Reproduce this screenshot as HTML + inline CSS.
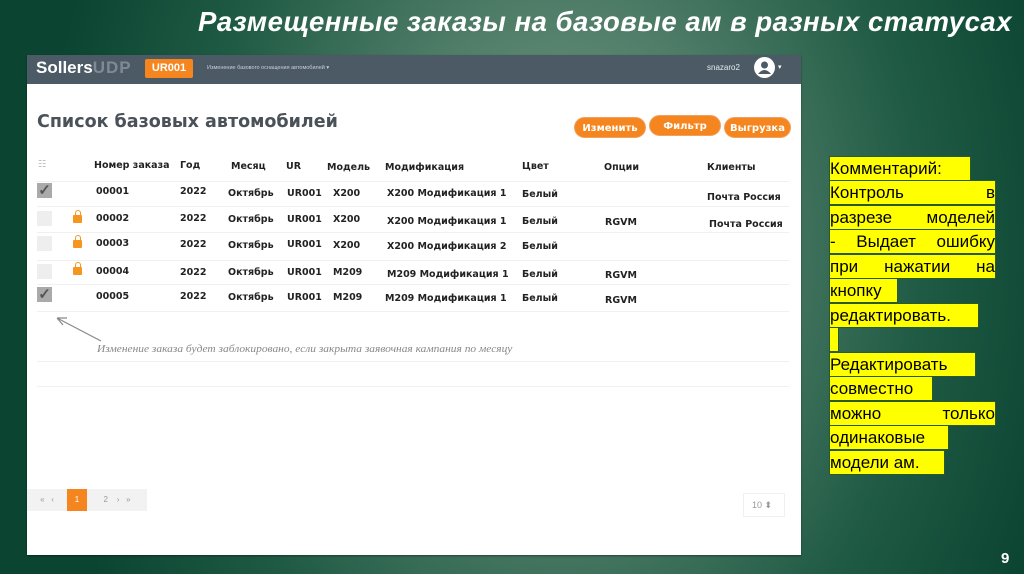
<!DOCTYPE html>
<html><head><meta charset="utf-8"><style>
*{margin:0;padding:0;box-sizing:border-box}
body{width:1024px;height:574px;overflow:hidden;position:relative;font-family:"Liberation Sans",sans-serif;
background:radial-gradient(ellipse 520px 700px at 560px 250px,#7a9e8c 0%,#4f7d68 35%,#1f5a44 70%,#0b4532 100%);}
.title{position:absolute;left:198px;top:6px;color:#fff;font-weight:bold;font-style:italic;font-size:27.5px;white-space:nowrap;letter-spacing:0.5px}
.shot{position:absolute;left:27px;top:55px;width:774px;height:500px;background:#fff;box-shadow:0 1px 2px rgba(0,0,0,.4)}
.bar{position:absolute;left:0;top:0;width:774px;height:29px;background:#4c5a66}
.logo{position:absolute;left:9px;top:3px;color:#fff;font-weight:bold;font-size:17px}
.logo span{color:#7e8b96;letter-spacing:1px}
.ur{position:absolute;left:118px;top:4px;width:48px;height:19px;background:#f5861f;color:#fff;font-weight:bold;font-size:11px;text-align:center;line-height:19px;border-radius:2px}
.sub{position:absolute;left:180px;top:10px;color:#c8d0d6;font-size:5.5px}
.user{position:absolute;left:680px;top:8px;color:#e6eaee;font-size:8px}
.av{position:absolute;left:727px;top:2px;width:21px;height:21px;border-radius:50%;background:#fff}
.h1{position:absolute;left:10px;top:57px;font-family:"DejaVu Sans",sans-serif;font-weight:bold;font-size:17.5px;color:#4a5158}
.btn{position:absolute;top:62px;height:21px;background:#f5861f;color:#fff;border-radius:11px;font-family:"DejaVu Sans",sans-serif;font-weight:bold;font-size:10px;line-height:21px;text-align:center;border:1px solid #f0a060}
.t{position:absolute;font-family:"DejaVu Sans",sans-serif;font-weight:bold;font-size:9.5px;color:#222;white-space:nowrap}
.cb{position:absolute;left:10px;width:15px;height:15px;background:#eee}
.cb.on{background:#aaa;color:#555;font-size:15px;line-height:15px;text-align:center;font-weight:bold}
.lock{position:absolute;left:46px;width:9px;height:8px;background:#f5961f;border-radius:1px}
.lock:before{content:"";position:absolute;left:1.5px;top:-5px;width:6px;height:6px;border:1.5px solid #f5961f;border-bottom:none;border-radius:4px 4px 0 0;box-sizing:border-box}
.line{position:absolute;left:10px;width:752px;height:1px;background:#f0f0f0}
.hand{position:absolute;left:70px;top:288px;font-family:"Liberation Serif",serif;font-style:italic;font-size:11px;color:#888;white-space:nowrap;transform:scaleX(1.04);transform-origin:left}
.pg{position:absolute;top:434px;height:22px;background:#f2f2f2;color:#999;font-size:8px;line-height:22px;text-align:center}
.c{position:absolute;left:830px;width:165px;height:23px;font-size:17px;line-height:23px;color:#000;background:#ffff00;outline:1px solid #2a5a2a;white-space:nowrap}
.j{text-align:justify;text-align-last:justify}
.nine{position:absolute;left:1001px;top:550px;color:#fff;font-weight:bold;font-size:15px}
</style></head><body>
<div class="title">Размещенные заказы на базовые ам в разных статусах</div>
<div class="shot">
 <div class="bar">
  <div class="logo">Sollers<span>UDP</span></div>
  <div class="ur">UR001</div>
  <div class="sub">Изменение базового оснащения автомобилей ▾</div>
  <div class="user">snazaro2</div>
  <div class="av"><svg width="21" height="21"><circle cx="10.5" cy="8" r="3.5" fill="#4c5a66"/><path d="M4 17 Q10.5 9 17 17" fill="#4c5a66"/></svg></div>
  <div style="position:absolute;left:751px;top:8px;color:#fff;font-size:7px">▾</div>
 </div>
 <div class="h1">Список базовых автомобилей</div>
 <div class="btn" style="left:547px;width:72px">Изменить</div>
 <div class="btn" style="left:622px;width:72px;top:60px">Фильтр</div>
 <div class="btn" style="left:697px;width:67px">Выгрузка</div>
 <div class="t" style="left:11px;top:104px;color:#bbb;font-weight:normal">☷</div>
 <div class="t" style="left:67px;top:105px">Номер заказа</div>
 <div class="t" style="left:153px;top:105px">Год</div>
 <div class="t" style="left:204px;top:106px">Месяц</div>
 <div class="t" style="left:259px;top:106px">UR</div>
 <div class="t" style="left:300px;top:107px">Модель</div>
 <div class="t" style="left:358px;top:107px">Модификация</div>
 <div class="t" style="left:495px;top:106px">Цвет</div>
 <div class="t" style="left:577px;top:107px">Опции</div>
 <div class="t" style="left:680px;top:107px">Клиенты</div>
 <div class="line" style="top:126px"></div>
 <div class="cb on" style="top:128px">✓</div>
 <div class="t" style="left:69px;top:131px">00001</div><div class="t" style="left:153px;top:131px">2022</div><div class="t" style="left:201px;top:133px">Октябрь</div><div class="t" style="left:260px;top:133px">UR001</div><div class="t" style="left:306px;top:133px">X200</div><div class="t" style="left:360px;top:133px">X200 Модификация 1</div><div class="t" style="left:495px;top:134px">Белый</div><div class="t" style="left:680px;top:137px">Почта Россия</div>
 <div class="line" style="top:151px"></div>
 <div class="cb" style="top:156px"></div><div class="lock" style="top:160px"></div>
 <div class="t" style="left:69px;top:158px">00002</div><div class="t" style="left:153px;top:158px">2022</div><div class="t" style="left:201px;top:159px">Октябрь</div><div class="t" style="left:260px;top:159px">UR001</div><div class="t" style="left:306px;top:159px">X200</div><div class="t" style="left:360px;top:161px">X200 Модификация 1</div><div class="t" style="left:495px;top:161px">Белый</div><div class="t" style="left:578px;top:162px">RGVM</div><div class="t" style="left:682px;top:164px">Почта Россия</div>
 <div class="line" style="top:177px"></div>
 <div class="cb" style="top:181px"></div><div class="lock" style="top:185px"></div>
 <div class="t" style="left:69px;top:183px">00003</div><div class="t" style="left:153px;top:184px">2022</div><div class="t" style="left:201px;top:185px">Октябрь</div><div class="t" style="left:260px;top:184px">UR001</div><div class="t" style="left:306px;top:185px">X200</div><div class="t" style="left:360px;top:186px">X200 Модификация 2</div><div class="t" style="left:495px;top:186px">Белый</div>
 <div class="line" style="top:205px"></div>
 <div class="cb" style="top:209px"></div><div class="lock" style="top:212px"></div>
 <div class="t" style="left:69px;top:211px">00004</div><div class="t" style="left:153px;top:212px">2022</div><div class="t" style="left:201px;top:212px">Октябрь</div><div class="t" style="left:260px;top:212px">UR001</div><div class="t" style="left:306px;top:212px">M209</div><div class="t" style="left:360px;top:214px">M209 Модификация 1</div><div class="t" style="left:495px;top:214px">Белый</div><div class="t" style="left:578px;top:215px">RGVM</div>
 <div class="line" style="top:229px"></div>
 <div class="cb on" style="top:232px">✓</div>
 <div class="t" style="left:69px;top:236px">00005</div><div class="t" style="left:153px;top:236px">2022</div><div class="t" style="left:201px;top:237px">Октябрь</div><div class="t" style="left:260px;top:237px">UR001</div><div class="t" style="left:306px;top:237px">M209</div><div class="t" style="left:358px;top:238px">M209 Модификация 1</div><div class="t" style="left:495px;top:238px">Белый</div><div class="t" style="left:578px;top:240px">RGVM</div>
 <div class="line" style="top:256px"></div>
 <svg style="position:absolute;left:28px;top:260px" width="50" height="30"><path d="M2 3 L46 26 M2 3 L12 3 M2 3 L8 10" stroke="#888" stroke-width="1.2" fill="none"/></svg>
 <div class="hand">Изменение заказа будет заблокировано, если закрыта заявочная кампания по месяцу</div>
 <div class="line" style="top:306px"></div>
 <div class="line" style="top:331px"></div>
 <div class="pg" style="left:0;width:40px">«&nbsp;&nbsp;&nbsp;‹</div>
 <div class="pg" style="left:40px;width:20px;background:#f5861f;color:#fff">1</div>
 <div class="pg" style="left:60px;width:60px">2&nbsp;&nbsp;&nbsp;&nbsp;›&nbsp;&nbsp;&nbsp;»</div>
 <div style="position:absolute;left:716px;top:438px;width:42px;height:24px;border:1px solid #f0f0f0;color:#999;font-size:9px;line-height:22px;padding-left:8px">10 ⬍</div>
</div>
<div class="c" style="top:157px;width:140px">Комментарий:</div>
<div class="c j" style="top:181px">Контроль в</div>
<div class="c j" style="top:206px">разрезе моделей</div>
<div class="c j" style="top:230px">- Выдает ошибку</div>
<div class="c j" style="top:255px">при нажатии на</div>
<div class="c" style="top:279px;width:67px">кнопку</div>
<div class="c" style="top:304px;width:148px">редактировать.</div>
<div class="c" style="top:328px;width:8px"></div>
<div class="c" style="top:353px;width:145px">Редактировать</div>
<div class="c" style="top:377px;width:102px">совместно</div>
<div class="c j" style="top:402px">можно только</div>
<div class="c" style="top:426px;width:118px">одинаковые</div>
<div class="c" style="top:451px;width:114px">модели ам.</div>
<div class="nine">9</div>
</body></html>
